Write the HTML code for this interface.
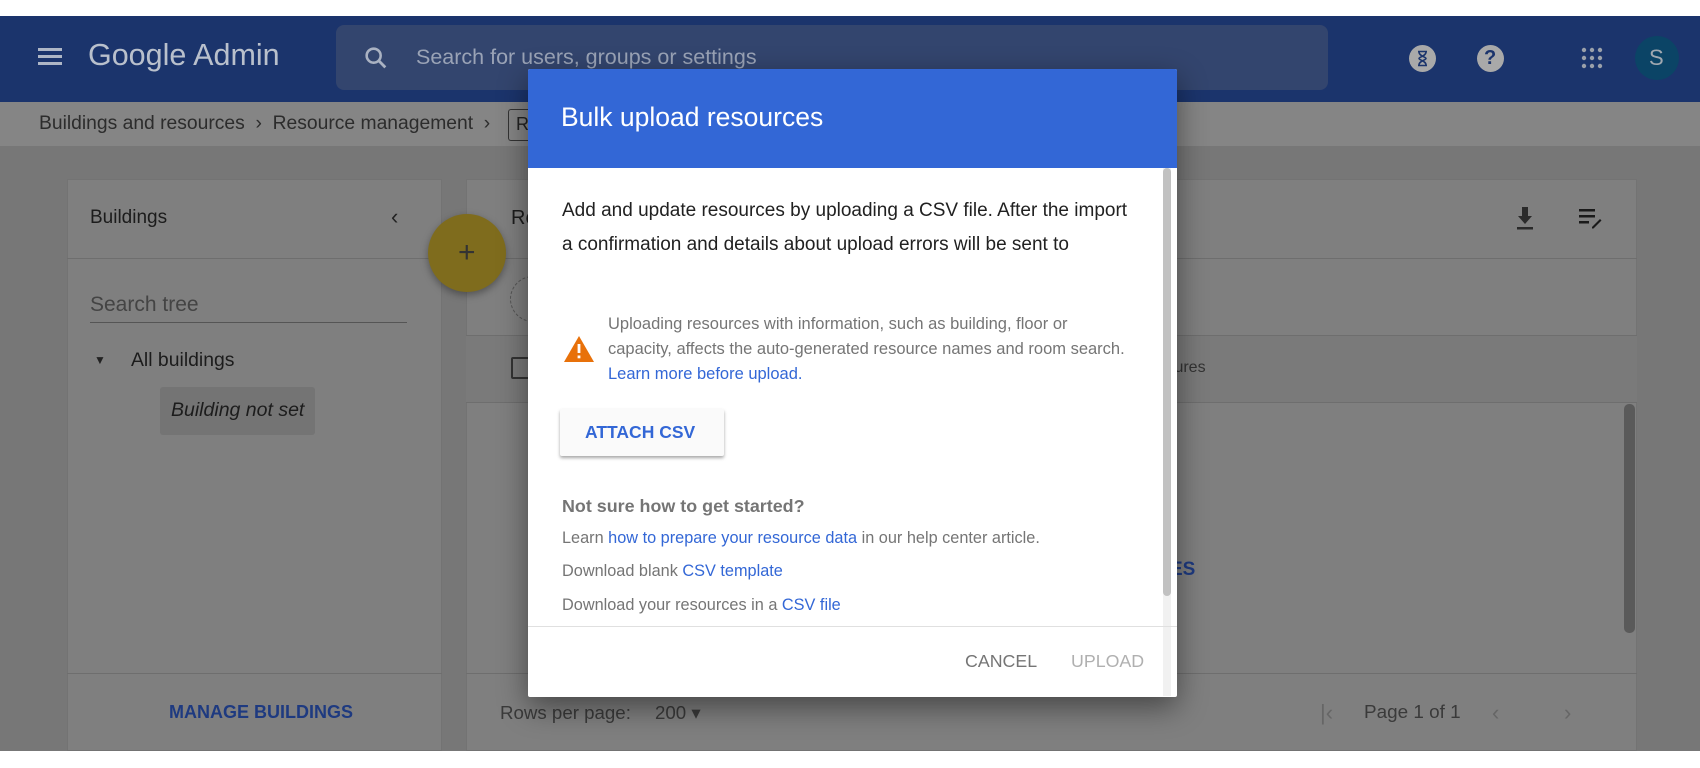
<!DOCTYPE html>
<html><head><meta charset="utf-8"><style>
*{margin:0;padding:0;box-sizing:border-box}
body{width:1700px;height:768px;position:relative;overflow:hidden;background:#fff;font-family:"Liberation Sans",Arial,sans-serif}
.a{position:absolute}
.t{position:absolute;white-space:nowrap}
</style></head><body>
<div class="a" style="left:0;top:16px;width:1700px;height:735px;background:#777"></div>
<!-- header -->
<div class="a" style="left:0;top:16px;width:1700px;height:86px;background:#1b346c"></div>
<div class="a" style="left:38px;top:48px;width:24px;height:3px;background:#aeb6c6;box-shadow:0 7px 0 #aeb6c6,0 14px 0 #aeb6c6"></div>
<div class="t" style="left:88px;top:38px;font-size:30.5px;color:#b9c0cc">Google Admin</div>
<div class="a" style="left:336px;top:25px;width:992px;height:65px;background:#33456e;border-radius:8px"></div>
<svg class="a" style="left:362px;top:44px" width="28" height="28" viewBox="0 0 24 24"><circle cx="10" cy="10" r="6" fill="none" stroke="#aab2c2" stroke-width="2.2"/><path d="M14.5 14.5L20 20" stroke="#aab2c2" stroke-width="2.4"/></svg>
<div class="t" style="left:416px;top:45px;font-size:21.5px;color:#9aa3b6">Search for users, groups or settings</div>
<div class="a" style="left:1409px;top:45px;width:27px;height:27px;border-radius:50%;background:#a9a9a9"></div>
<svg class="a" style="left:1415px;top:50px" width="15" height="17" viewBox="0 0 15 17"><path d="M3 1.5h9M3 15.5h9M4 2c0 4 7 5 7 6.5S4 11 4 15M11 2c0 4-7 5-7 6.5S11 11 11 15" fill="none" stroke="#1b346c" stroke-width="1.6"/></svg>
<div class="a" style="left:1477px;top:45px;width:27px;height:27px;border-radius:50%;background:#a9a9a9"></div>
<div class="t" style="left:1484px;top:47px;font-size:20px;color:#1b346c;font-weight:bold">?</div>
<svg class="a" style="left:1580px;top:46px" width="24" height="24" viewBox="0 0 24 24" fill="#9aa0aa"><circle cx="4" cy="4" r="2.2"/><circle cx="12" cy="4" r="2.2"/><circle cx="20" cy="4" r="2.2"/><circle cx="4" cy="12" r="2.2"/><circle cx="12" cy="12" r="2.2"/><circle cx="20" cy="12" r="2.2"/><circle cx="4" cy="20" r="2.2"/><circle cx="12" cy="20" r="2.2"/><circle cx="20" cy="20" r="2.2"/></svg>
<div class="a" style="left:1635px;top:36px;width:44px;height:44px;border-radius:50%;background:#0b4466"></div>
<div class="t" style="left:1649px;top:45px;font-size:22px;color:#a0a8b0">S</div>
<!-- breadcrumb -->
<div class="a" style="left:0;top:102px;width:1700px;height:44px;background:#858585"></div>
<div class="t" style="left:39px;top:113px;font-size:19.3px;color:#2c2c2c">Buildings and resources &nbsp;›&nbsp; Resource management &nbsp;›</div>
<div class="a" style="left:508px;top:109px;width:30px;height:32px;border:1px solid #333;border-right:none;border-radius:3px 0 0 3px"></div>
<div class="t" style="left:516px;top:114px;font-size:18px;color:#222">R</div>
<!-- left panel -->
<div class="a" style="left:67px;top:179px;width:375px;height:572px;background:#7f7f7f;border:1px solid #737373"></div>
<div class="t" style="left:90px;top:207px;font-size:19px;color:#1c1c1c">Buildings</div>
<div class="t" style="left:391px;top:204px;font-size:22px;color:#222">‹</div>
<div class="a" style="left:67px;top:258px;width:375px;height:1px;background:#6e6e6e"></div>
<div class="t" style="left:90px;top:293px;font-size:21px;color:#444">Search tree</div>
<div class="a" style="left:90px;top:322px;width:317px;height:1px;background:#555"></div>
<div class="t" style="left:94px;top:353px;font-size:12px;color:#222">▼</div>
<div class="t" style="left:131px;top:349px;font-size:19.4px;color:#1c1c1c">All buildings</div>
<div class="a" style="left:160px;top:387px;width:155px;height:48px;background:#747474;border-radius:3px"></div>
<div class="t" style="left:171px;top:399px;font-size:19.5px;color:#1c1c1c;font-style:italic">Building not set</div>
<div class="a" style="left:67px;top:673px;width:375px;height:1px;background:#6e6e6e"></div>
<div class="t" style="left:169px;top:702px;font-size:18px;color:#1e3a80;font-weight:bold">MANAGE BUILDINGS</div>
<!-- right panel -->
<div class="a" style="left:466px;top:179px;width:1171px;height:572px;background:#7f7f7f;border:1px solid #737373"></div>
<div class="t" style="left:511px;top:207px;font-size:20px;color:#1c1c1c">Re</div>
<svg class="a" style="left:1513px;top:205px" width="24" height="26" viewBox="0 0 24 26"><path d="M9 2h6v9h4l-7 8-7-8h4z" fill="#2a2a2a"/><rect x="4" y="22" width="16" height="2.5" fill="#2a2a2a"/></svg>
<svg class="a" style="left:1577px;top:207px" width="26" height="22" viewBox="0 0 26 22" fill="#1a1a1a"><rect x="2" y="2" width="16" height="2.5"/><rect x="2" y="8" width="16" height="2.5"/><rect x="2" y="14" width="10" height="2.5"/><path d="M15 20l8-8 1.5 1.5-8 8H15z"/></svg>
<div class="a" style="left:466px;top:258px;width:1171px;height:1px;background:#6e6e6e"></div>
<div class="a" style="left:510px;top:276px;width:46px;height:46px;border-radius:50%;border:1px dashed #555"></div>
<div class="a" style="left:466px;top:335px;width:1171px;height:68px;background:#7a7a7a;border-top:1px solid #6e6e6e;border-bottom:1px solid #6e6e6e"></div>
<div class="a" style="left:511px;top:357px;width:22px;height:22px;border:2px solid #333;border-radius:2px"></div>
<div class="t" style="left:1170px;top:359px;font-size:16px;color:#333">tures</div>
<div class="t" style="left:1170px;top:559px;font-size:19px;color:#1e3a80;font-weight:bold">ES</div>
<div class="a" style="left:1624px;top:404px;width:11px;height:229px;background:#5a5a5a;border-radius:5px"></div>
<div class="a" style="left:466px;top:673px;width:1171px;height:1px;background:#6e6e6e"></div>
<div class="t" style="left:500px;top:702px;font-size:18.7px;color:#3a3a3a">Rows per page:</div>
<div class="t" style="left:655px;top:702px;font-size:18.7px;color:#3a3a3a">200 ▾</div>
<div class="t" style="left:1320px;top:700px;font-size:22px;color:#666">|‹</div>
<div class="t" style="left:1364px;top:702px;font-size:18.9px;color:#3a3a3a">Page 1 of 1</div>
<div class="t" style="left:1492px;top:700px;font-size:22px;color:#666">‹</div>
<div class="t" style="left:1564px;top:700px;font-size:22px;color:#666">›</div>
<!-- FAB -->
<div class="a" style="left:428px;top:214px;width:78px;height:78px;border-radius:50%;background:#7f6c1d;box-shadow:0 3px 8px rgba(0,0,0,.35)"></div>
<div class="t" style="left:458px;top:236px;font-size:30px;color:#333">+</div>
<!-- dialog -->
<div class="a" style="left:528px;top:69px;width:649px;height:628px;background:#fff;box-shadow:0 10px 30px rgba(0,0,0,.45);border-radius:2px;overflow:hidden">
 <div class="a" style="left:0;top:0;width:649px;height:99px;background:#3367d6"></div>
 <div class="t" style="left:33px;top:33px;font-size:26.5px;color:#fff">Bulk upload resources</div>
 <div class="a" style="left:635px;top:99px;width:8px;height:528px;background:#f1f1f1"></div>
 <div class="a" style="left:635px;top:99px;width:8px;height:428px;background:#c1c1c1;border-radius:4px"></div>
 <div class="t" style="left:34px;top:125px;font-size:19px;color:#212121;line-height:34px">Add and update resources by uploading a CSV file. After the import<br>a confirmation and details about upload errors will be sent to</div>
 <svg class="a" style="left:35px;top:266px" width="32" height="28" viewBox="0 0 32 28"><path d="M16 1L31 27H1z" fill="#e8710a"/><rect x="14.6" y="9" width="2.8" height="9" fill="#fff"/><rect x="14.6" y="20.5" width="2.8" height="2.8" fill="#fff"/></svg>
 <div class="t" style="left:80px;top:243px;font-size:16.5px;color:#757575;line-height:25px">Uploading resources with information, such as building, floor or<br>capacity, affects the auto-generated resource names and room search.<br><span style="color:#3367d6">Learn more before upload.</span></div>
 <div class="a" style="left:32px;top:340px;width:164px;height:47px;background:#fafafa;box-shadow:0 2px 3px rgba(0,0,0,.35);border-radius:2px"></div>
 <div class="t" style="left:57px;top:353px;font-size:17.5px;color:#3367d6;font-weight:bold">ATTACH CSV</div>
 <div class="t" style="left:34px;top:427px;font-size:17.9px;color:#757575;font-weight:bold">Not sure how to get started?</div>
 <div class="t" style="left:34px;top:460px;font-size:16.3px;color:#757575">Learn <span style="color:#3367d6">how to prepare your resource data</span> in our help center article.</div>
 <div class="t" style="left:34px;top:493px;font-size:16.3px;color:#757575">Download blank <span style="color:#3367d6">CSV template</span></div>
 <div class="t" style="left:34px;top:527px;font-size:16.3px;color:#757575">Download your resources in a <span style="color:#3367d6">CSV file</span></div>
 <div class="a" style="left:0;top:557px;width:649px;height:1px;background:#e0e0e0"></div>
 <div class="t" style="left:437px;top:582px;font-size:17.8px;color:#757575">CANCEL</div>
 <div class="t" style="left:543px;top:582px;font-size:17.8px;color:#b0b0b0">UPLOAD</div>
</div>
</body></html>
